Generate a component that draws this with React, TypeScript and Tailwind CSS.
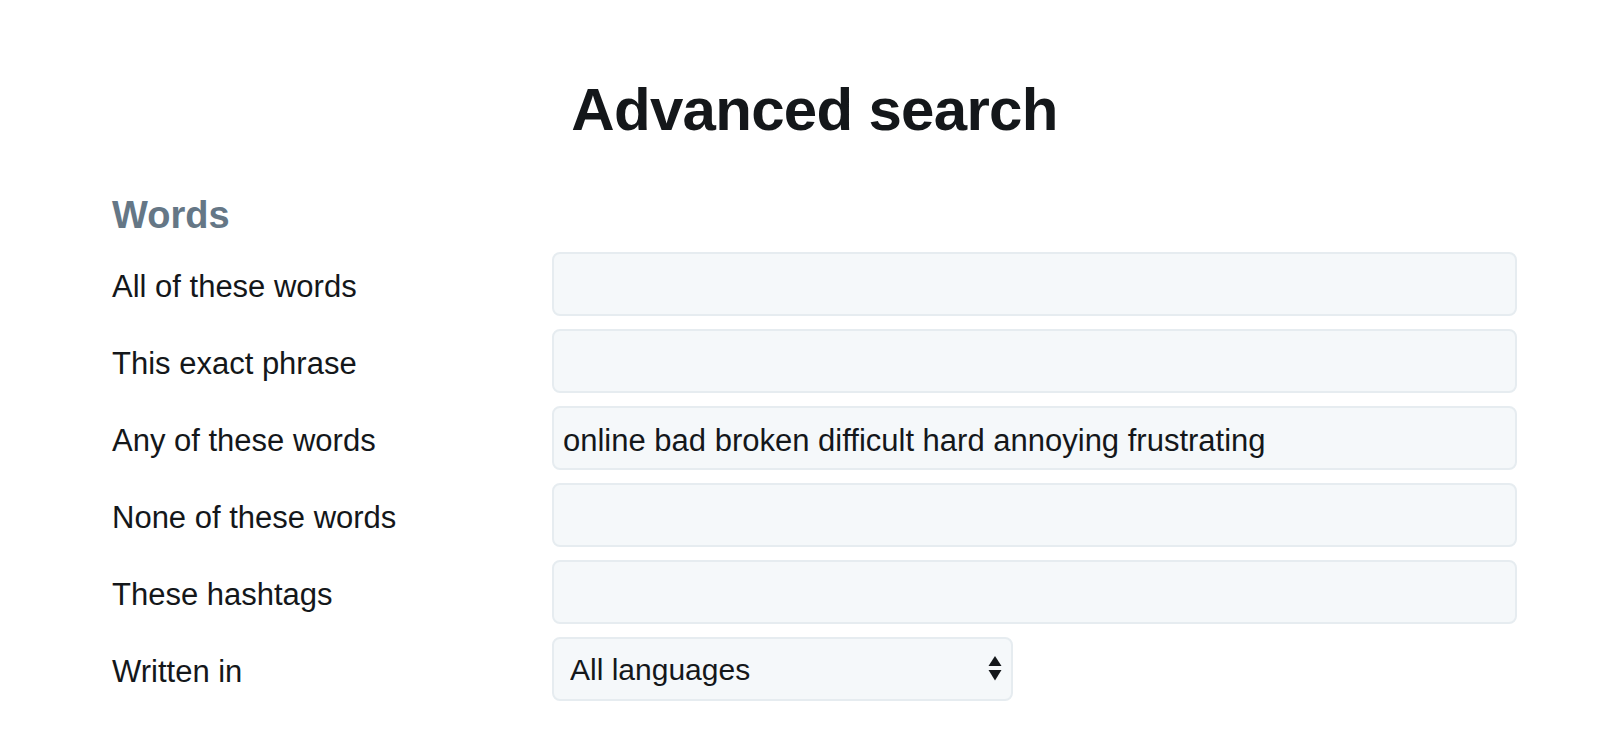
import { useState } from 'react'

// 검색 조건 행
const FIELDS = [
  { id: 'all',      label: 'All of these words', value: '' },
  { id: 'exact',    label: 'This exact phrase',  value: '' },
  { id: 'any',      label: 'Any of these words', value: 'online bad broken difficult hard annoying frustrating' },
  { id: 'none',     label: 'None of these words', value: '' },
  { id: 'hashtags', label: 'These hashtags',     value: '' },
] as const

function SortArrows() {
  return (
    <svg width="14" height="26" viewBox="0 0 14 26" className="pointer-events-none absolute right-[11px] top-1/2 -translate-y-1/2">
      <path d="M7 0 L13.5 10 L0.5 10 Z" fill="#14171a" />
      <path d="M0.5 14 L13.5 14 L7 24.5 Z" fill="#14171a" />
    </svg>
  )
}

export default function App() {
  const [values, setValues] = useState<Record<string, string>>(
    Object.fromEntries(FIELDS.map(f => [f.id, f.value]))
  )
  const [lang, setLang] = useState('all')

  return (
    <div className="min-h-screen bg-white text-[#14171a] font-['Liberation_Sans',Arial,sans-serif]">
      <div className="ml-[112px] w-[1405px] pt-[80px]">
        <h1 className="text-center text-[60px] leading-[60px] font-bold tracking-[-0.7px]">Advanced search</h1>

        <h2 className="mt-[56px] text-[38px] leading-[38px] font-bold text-[#657786]">Words</h2>

        <div className="mt-[18px] flex flex-col gap-[13px]">
          {FIELDS.map(f => (
            <div key={f.id} className="flex items-center">
              <label htmlFor={f.id} className="w-[440px] shrink-0 pt-[6px] text-[31px] leading-[40px]">{f.label}</label>
              <input
                id={f.id}
                value={values[f.id]}
                onChange={e => setValues(v => ({ ...v, [f.id]: e.target.value }))}
                className="h-[64px] flex-1 rounded-[8px] border-2 border-[#e6ecf0] bg-[#f5f8fa] pl-[9px] pt-[6px] text-[31px] text-[#14171a] outline-none"
              />
            </div>
          ))}

          <div className="flex items-center">
            <label htmlFor="lang" className="w-[440px] shrink-0 pt-[5px] text-[31px] leading-[40px]">Written in</label>
            <div className="relative w-[461px]">
              <select
                id="lang"
                value={lang}
                onChange={e => setLang(e.target.value)}
                className="h-[64px] w-full appearance-none rounded-[8px] border-2 border-[#e6ecf0] bg-[#f5f8fa] pl-[16px] text-[30px] text-[#14171a] outline-none"
              >
                <option value="all">All languages</option>
                <option value="en">English</option>
                <option value="ko">Korean</option>
              </select>
              <SortArrows />
            </div>
          </div>
        </div>
      </div>
    </div>
  )
}
